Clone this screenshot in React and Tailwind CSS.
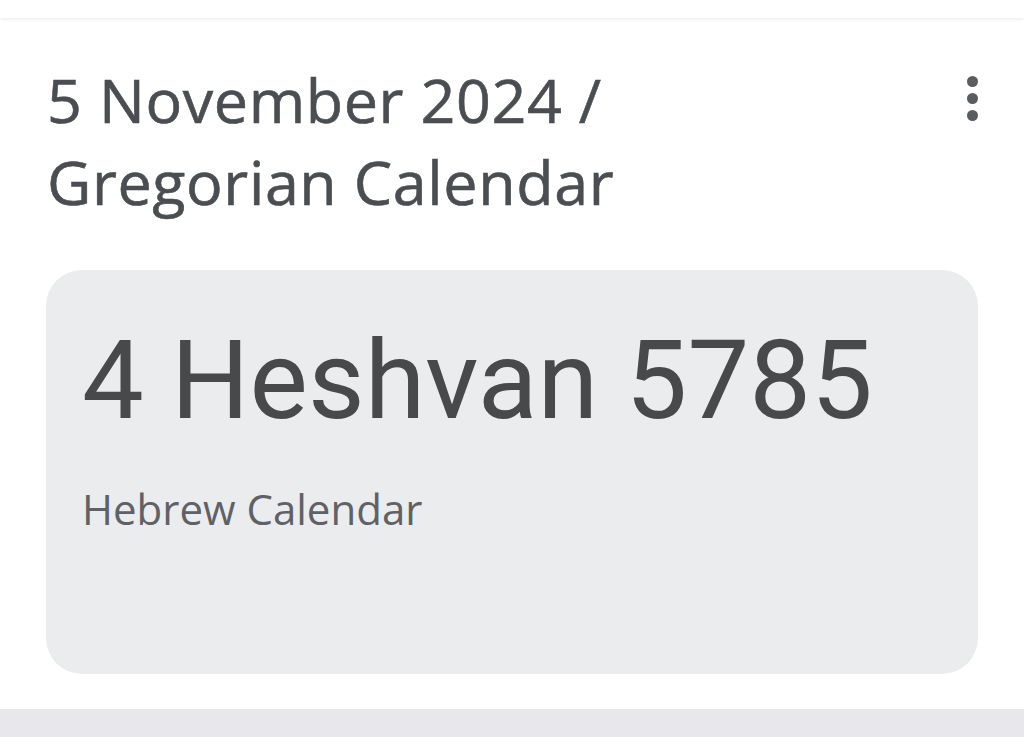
import React from 'react';

export default function App() {
    return (
        <div className="w-[1024px] h-[751px] bg-white overflow-hidden relative" style={{ fontFamily: 'Roboto, "Open Sans", sans-serif' }}>
            <div className="h-[18px] bg-white shadow-[0_2px_3px_rgba(0,0,0,0.06)]" />
            <div className="flex justify-between pl-[47px] pr-[40px] pt-[41px]">
                <h1 className="text-[61px] leading-[82px] tracking-[0.6px] text-[#4a4d52] font-normal [-webkit-text-stroke:0.6px_#4a4d52]" style={{ fontFamily: '"Open Sans", sans-serif' }}>
                    5 November 2024 /<br />Gregorian Calendar
                </h1>
                <button className="mt-[13px] w-[24px] h-[52px] flex flex-col items-center justify-center gap-[6px]">
                    <span className="w-[11px] h-[11px] rounded-full bg-[#5a5c60]" />
                    <span className="w-[11px] h-[11px] rounded-full bg-[#5a5c60]" />
                    <span className="w-[11px] h-[11px] rounded-full bg-[#5a5c60]" />
                </button>
            </div>
            <div className="mx-[46px] mt-[47px] h-[404px] rounded-[36px] bg-[#ebecee] px-[36px] pt-[55px]">
                <div className="text-[110px] leading-[112px] text-[#48494b]">4 Heshvan 5785</div>
                <div className="mt-[48px] text-[42px] leading-[48px] text-[#5f6166]" style={{ fontFamily: '"Open Sans", sans-serif' }}>Hebrew Calendar</div>
            </div>
            <div className="mt-[35px] h-[28px] bg-[#e8e8ec]" />
        </div>
    );
}
